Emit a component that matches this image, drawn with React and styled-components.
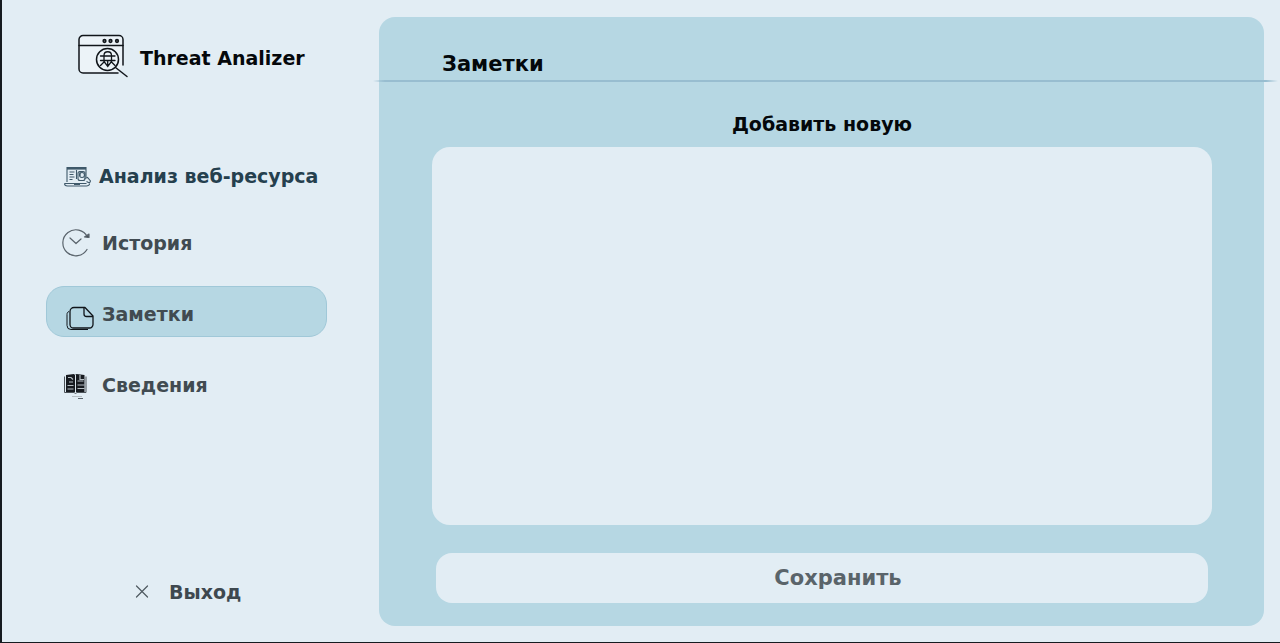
import React from "react";
import styled, { createGlobalStyle } from "styled-components";

const GlobalStyle = createGlobalStyle`
  *, *::before, *::after { box-sizing: border-box; }
  body {
    margin: 0;
    background: #e2edf4;
    font-family: "DejaVu Sans", "Noto Sans", sans-serif;
    font-weight: 700;
  }
`;

const Page = styled.div`
  display: flex;
  min-height: 100vh;
  border-left: 2px solid #161b20;
  border-bottom: 1px solid #161b20;
`;

const Sidebar = styled.aside`
  flex: 0 0 377px;
  display: flex;
  flex-direction: column;
  padding: 32px 52px 38px 44px;
`;

const Brand = styled.div`
  display: flex;
  align-items: center;
  gap: 10px;
  padding-left: 30px;
  height: 48px;
  color: #05080b;
  font-size: 19px;
  line-height: 24px;
  white-space: nowrap;

  span { padding-top: 4px; }
`;

const Nav = styled.nav`
  display: flex;
  flex-direction: column;
  margin-top: 68px;
`;

const NavLink = styled.a`
  display: flex;
  align-items: center;
  gap: ${(p) => (p.$tight ? 8 : 11)}px;
  height: 51px;
  margin-top: ${(p) => (p.$near ? 16 : 20)}px;
  padding: 5px 0 0 14px;
  border: 1px solid ${(p) => (p.$active ? "#a0c8d8" : "transparent")};
  border-radius: 18px;
  background: ${(p) => (p.$active ? "#b6d7e3" : "transparent")};
  color: ${(p) => (p.$tight ? "#25404e" : "#414b51")};
  font-size: 19px;
  line-height: 24px;
  text-decoration: none;
  white-space: nowrap;

  &:first-child { margin-top: 0; }
  svg { flex: none; }
`;

const ExitButton = styled.button`
  display: flex;
  align-items: center;
  gap: 20px;
  align-self: flex-start;
  margin: auto 0 0 89px;
  padding: 0;
  border: 0;
  background: none;
  color: #3e484f;
  font: inherit;
  font-size: 19px;
  line-height: 24px;
`;

const Panel = styled.main`
  flex: 1;
  min-width: 0;
  display: flex;
  flex-direction: column;
  margin: 17px 16px 16px 0;
  padding-bottom: 23px;
  border-radius: 16px;
  background: #b6d7e3;
`;

const Title = styled.h1`
  margin: 0;
  padding: 35px 0 4px 63px;
  color: #04080b;
  font-size: 21px;
  line-height: 24px;
`;

const Divider = styled.hr`
  align-self: stretch;
  height: 2px;
  margin: 0 -14px 0 -6px;
  border: 0;
  background: linear-gradient(to right, transparent, #98bdd0 12px, #98bdd0 calc(100% - 12px), transparent);
`;

const NoteForm = styled.form`
  flex: 1;
  display: flex;
  flex-direction: column;
  padding: 30px 52px 0 53px;
`;

const NoteLabel = styled.label`
  color: #04080b;
  font-size: 19px;
  line-height: 24px;
  text-align: center;
`;

const NoteText = styled.textarea`
  flex: 1;
  min-height: 200px;
  margin-top: 11px;
  padding: 20px;
  border: 0;
  border-radius: 18px;
  outline: 0;
  resize: none;
  background: #e2edf4;
  color: #25404e;
  font: inherit;
`;

const SaveButton = styled.button`
  height: 50px;
  margin: 28px 4px 0;
  padding: 0 0 0 32px;
  border: 0;
  border-radius: 16px;
  background: #e2edf4;
  color: #5a646a;
  font: inherit;
  font-size: 21px;
  line-height: 24px;
`;

const LogoIcon = () => (
  <svg width="54" height="44" viewBox="0 0 54 44" fill="none" stroke="#10151a" strokeWidth="1.5" strokeLinecap="round" aria-hidden="true">
    <path d="M42 39H7a4 4 0 0 1-4-4V5.500a4 4 0 0 1 4-4h36a4 4 0 0 1 4 4V31" fill="#ecf3f8" />
    <path d="M3 11.500h44" />
    <g strokeWidth="1.700">
      <circle cx="28.500" cy="7" r="1.300" />
      <circle cx="34.500" cy="7" r="1.300" />
      <circle cx="41" cy="7" r="1.300" />
    </g>
    <circle cx="31.500" cy="25.500" r="11" />
    <path d="M39.500 33.500L51 42.500" />
    <path d="M28 21.500c0-5 7.500-5 7.500 0v6l-3.750 5-3.750-5zM24.500 22h14.500M24.500 26.500h14.500M24.500 31.500l3.500-3.500M39 31.500l-3.500-3.500M31.700 27.500v4" strokeWidth="1.300" />
  </svg>
);

const AnalysisIcon = () => (
  <svg width="30" height="24" viewBox="-1 -1 30 24" fill="none" stroke="#3f596a" strokeWidth="1.100" aria-hidden="true">
    <path d="M5 17V2.500h19V12" />
    <path d="M5 3.500h19" strokeWidth="2.200" />
    <path d="M7.500 7h5M7.500 9.500h4M7.500 12h5M7.500 14.500h3M14.500 5v9M18 6v5" />
    <rect x="16" y="6.500" width="7" height="9" rx="2" />
    <circle cx="20" cy="10" r="2.500" />
    <path d="M22.500 13.500l3-1 3 3.500-1 2-3-1.500" />
    <path d="M2.500 18.500h22M2.500 18.500c0 2 1.500 2.500 3 2.500h19c1.500 0 3-1 3-2M12 19.500h6" />
  </svg>
);

const HistoryIcon = () => (
  <svg width="30" height="30" viewBox="0 0 30 30" fill="none" stroke="#59636b" strokeWidth="1.200" strokeLinecap="round" strokeLinejoin="round" aria-hidden="true">
    <path d="M26.500 9A13 13 0 1 0 26 21.500" />
    <path d="M23.500 9l4.500.500V6z" fill="#454d54" />
    <path d="M9 10l6 5.500 5-4.500" />
  </svg>
);

const NotesIcon = () => (
  <svg width="30" height="30" viewBox="-1 -1 30 30" overflow="visible" fill="none" stroke="#10151a" strokeWidth="1.300" strokeLinejoin="round" aria-hidden="true">
    <path d="M12 7.500h11l8 8.500v8.500a3.500 3.500 0 0 1-3.500 3.500H11.500A3.500 3.500 0 0 1 8 24.500v-13a4 4 0 0 1 4-4z" />
    <path d="M22 7.500v6.500a2.500 2.500 0 0 0 2.500 2.500H31" />
    <path d="M7 11.500c-1.500.500-2 1.500-2 3v11a4 4 0 0 0 4 4h17" strokeWidth="1" />
  </svg>
);

const BookIcon = () => (
  <svg width="30" height="30" viewBox="0 0 30 30" fill="none" aria-hidden="true">
    <path d="M5 5l8-1 1 1 1.500-1 8 1v17H5z" fill="#171b20" />
    <path d="M3.500 6.500v16h9.500l1.500 1 1.500-1h9v-16" stroke="#4c5358" />
    <path d="M14.500 5v18" stroke="#dce7ed" />
    <path d="M7 7.500h3l2 2M8 12h4M6.500 15.500h6M6.500 19h6M16.500 11h6M16.500 15h7M16.500 18.500h7M19 5v4.500h4" stroke="#b5bec3" strokeWidth="1.200" />
    <path d="M11 26.500h10" stroke="#b5bec3" />
    <path d="M17 28.500h5" stroke="#59636b" />
  </svg>
);

const CloseIcon = () => (
  <svg width="14" height="14" viewBox="0 0 14 14" fill="none" stroke="#4e5960" strokeWidth="1.200" strokeLinecap="round" aria-hidden="true">
    <path d="M1.500 1l11 11M12.500 1l-11 11" />
  </svg>
);

export default function App() {
  return (
    <>
      <GlobalStyle />
      <Page>
        <Sidebar>
          <Brand><LogoIcon /><span>Threat Analizer</span></Brand>
          <Nav>
            <NavLink href="#analysis" $tight><AnalysisIcon />Анализ веб-ресурса</NavLink>
            <NavLink href="#history" $near><HistoryIcon />История</NavLink>
            <NavLink href="#notes" $active aria-current="page"><NotesIcon />Заметки</NavLink>
            <NavLink href="#info"><BookIcon />Сведения</NavLink>
          </Nav>
          <ExitButton type="button"><CloseIcon />Выход</ExitButton>
        </Sidebar>
        <Panel>
          <Title>Заметки</Title>
          <Divider />
          <NoteForm onSubmit={(e) => e.preventDefault()}>
            <NoteLabel htmlFor="note">Добавить новую</NoteLabel>
            <NoteText id="note" />
            <SaveButton type="submit">Сохранить</SaveButton>
          </NoteForm>
        </Panel>
      </Page>
    </>
  );
}
